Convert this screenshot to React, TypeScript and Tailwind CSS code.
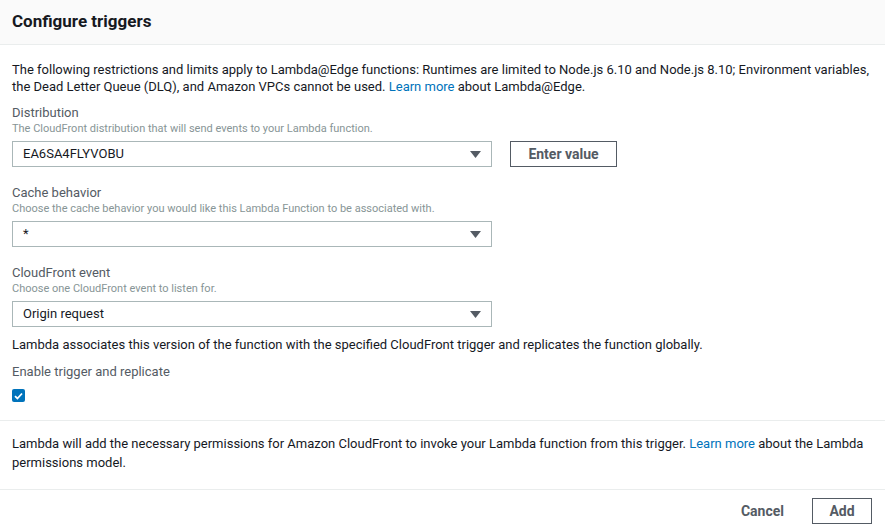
import React from "react";

function Caret() {
  return (
    <svg width="11" height="7" viewBox="0 0 11 7" className="shrink-0">
      <path d="M0 0 H11 L5.5 7 Z" fill="#545b64" />
    </svg>
  );
}

function Select({ value }: { value: string }) {
  return (
    <div className="flex h-[26px] w-[480px] items-center justify-between border border-[#aab7b8] bg-white pl-[10px] pr-[10px] text-[13px] text-[#16191f]">
      <span>{value}</span>
      <Caret />
    </div>
  );
}

function Field({ label, hint, value, extra }: { label: string; hint: string; value: string; extra?: React.ReactNode }) {
  return (
    <div className="flex flex-col">
      <div className="text-[13px] leading-[16px] text-[#545b64]">{label}</div>
      <div className="text-[11px] leading-[16px] text-[#879596]">{hint}</div>
      <div className="mt-[4px] flex items-center gap-[18px]">
        <Select value={value} />
        {extra}
      </div>
    </div>
  );
}

export default function App() {
  return (
    <div className="w-[885px] h-[530px] bg-white text-[#16191f]" style={{ fontFamily: "Roboto, 'Liberation Sans', sans-serif" }}>
      <div className="flex h-[45px] items-center border-b border-[#eaeded] bg-[#fafafa] px-[12px]">
        <h2 className="text-[17px] font-bold text-[#16191f]">Configure triggers</h2>
      </div>
      <div className="px-[12px] pt-[16px]">
        <p className="text-[13px] leading-[17px] text-[#16191f]">
          The following restrictions and limits apply to Lambda@Edge functions: Runtimes are limited to Node.js 6.10 and Node.js 8.10; Environment variables, the Dead Letter Queue (DLQ), and Amazon VPCs cannot be used.{" "}
          <span className="text-[#0073bb]">Learn more</span> about Lambda@Edge.
        </p>
        <div className="mt-[10px] flex flex-col gap-[18px]">
          <Field
            label="Distribution"
            hint="The CloudFront distribution that will send events to your Lambda function."
            value="EA6SA4FLYVOBU"
            extra={
              <button className="h-[26px] w-[107px] border border-[#545b64] bg-white text-[14px] font-bold text-[#545b64]">
                Enter value
              </button>
            }
          />
          <Field
            label="Cache behavior"
            hint="Choose the cache behavior you would like this Lambda Function to be associated with."
            value="*"
          />
          <Field
            label="CloudFront event"
            hint="Choose one CloudFront event to listen for."
            value="Origin request"
          />
        </div>
        <p className="mt-[10px] text-[13px] leading-[16px] text-[#16191f]">
          Lambda associates this version of the function with the specified CloudFront trigger and replicates the function globally.
        </p>
        <div className="mt-[11px] text-[13px] leading-[16px] text-[#545b64]">Enable trigger and replicate</div>
        <div className="mt-[9px] flex h-[13px] w-[13px] items-center justify-center rounded-[2px] bg-[#0073bb]">
          <svg width="9" height="8" viewBox="0 0 9 8">
            <path d="M1 4.2 L3.4 6.5 L8 1.5" stroke="white" strokeWidth="1.8" fill="none" />
          </svg>
        </div>
      </div>
      <div className="mt-[18px] border-t border-[#eaeded] px-[12px] pt-[13px] pb-[17px]">
        <p className="text-[13px] leading-[19px] text-[#16191f]">
          Lambda will add the necessary permissions for Amazon CloudFront to invoke your Lambda function from this trigger.{" "}
          <span className="text-[#0073bb]">Learn more</span> about the Lambda permissions model.
        </p>
      </div>
      <div className="flex items-center justify-end gap-[28px] border-t border-[#eaeded] px-[13px] pt-[8px]">
        <span className="text-[14px] font-bold text-[#545b64]">Cancel</span>
        <button className="h-[26px] w-[60px] border border-[#545b64] bg-white text-[14px] font-bold text-[#545b64]">Add</button>
      </div>
    </div>
  );
}
